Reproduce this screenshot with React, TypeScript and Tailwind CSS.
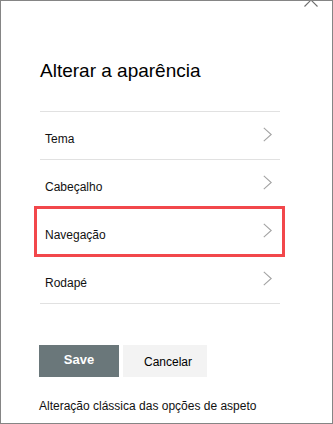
const ITEMS = ["Tema", "Cabeçalho", "Navegação", "Rodapé"];

function Chevron() {
  return (
    <svg width="9" height="15" viewBox="0 0 9 15" className="mb-[2px] shrink-0" fill="none">
      <polyline points="0.8,0.8 8.2,7.5 0.8,14.2" stroke="#a3a3a3" strokeWidth="1.1" />
    </svg>
  );
}

export default function App() {
  return (
    <div className="relative h-[424px] w-[333px] overflow-hidden border border-[#858585] bg-white font-['Liberation_Sans',Arial,sans-serif] text-black">
      {/* close button, mostly scrolled off the top */}
      <svg
        width="16"
        height="16"
        viewBox="0 0 16 16"
        className="absolute right-[13px] top-[-9px]"
        fill="none"
      >
        <path d="M1.5 1.5 L14.5 14.5 M14.5 1.5 L1.5 14.5" stroke="#6e6e6e" strokeWidth="1.1" />
      </svg>

      <div className="pl-[39px] pt-[58px]">
        <h1 className="text-[19px] leading-[24px] font-normal">Alterar a aparência</h1>

        <ul className="mt-[28px] w-[240px] border-t border-[#e1e1e1]">
          {ITEMS.map((item) => (
            <li
              key={item}
              className="relative flex h-[48px] items-center justify-between border-b border-[#e1e1e1] pl-[5px] pr-[8px]"
            >
              <span className="mt-[6px] text-[12px] leading-[16px] text-[#111]">{item}</span>
              <Chevron />
              {item === "Navegação" && (
                <div className="pointer-events-none absolute -left-[6px] -right-[5px] -top-[2px] -bottom-[2px] border-[3px] border-[#f2474b]" />
              )}
            </li>
          ))}
        </ul>

        <div className="-ml-px mt-[41px] flex gap-[4px]">
          <button className="h-[32px] w-[80px] bg-[#6a777a] pb-[3px] text-[13px] font-bold text-white">
            Save
          </button>
          <button className="h-[32px] w-[84px] bg-[#f3f3f3] pl-[21px] pt-[2px] text-left text-[12px] text-black">
            Cancelar
          </button>
        </div>

        <p className="-ml-px mt-[21px] text-[12px] leading-[16px] text-[#111]">
          Alteração clássica das opções de aspeto
        </p>
      </div>
    </div>
  );
}
